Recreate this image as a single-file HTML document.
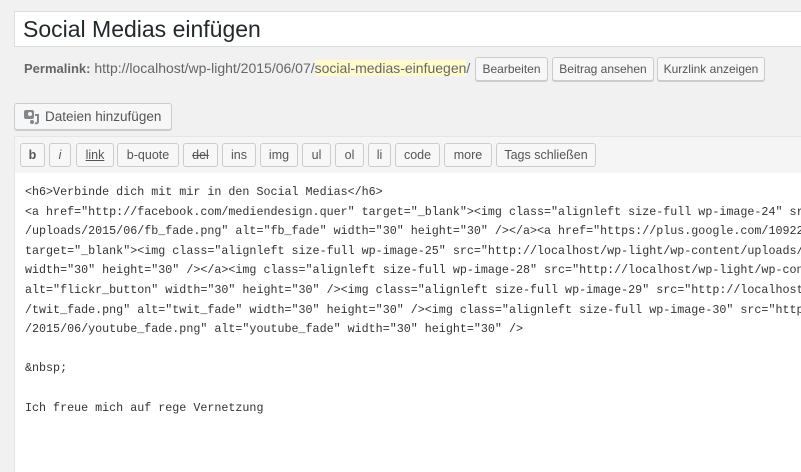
<!DOCTYPE html>
<html><head><meta charset="utf-8"><style>
body{margin:0;width:801px;height:472px;background:#f1f1f1;overflow:hidden;font-family:"Liberation Sans",sans-serif;position:relative;color:#444}
.title{position:absolute;left:14px;top:11px;width:787px;height:36px;background:#fff;border:1px solid #ddd;border-right:none;box-sizing:border-box;font-size:23px;color:#23282d;padding:4px 0 0 8px}
.perm{position:absolute;left:24px;top:60px;font-size:14px;color:#666;white-space:nowrap}
.perm b{color:#666;font-size:13px}
.hl{background:#fffbcc}
.btn{position:absolute;height:24px;border:1px solid #ccc;border-radius:3px;background:#f7f7f7;box-sizing:border-box;font-size:12px;color:#555;text-align:center;line-height:22px;box-shadow:0 1px 0 #ccc}
.tb{position:absolute;left:14px;top:136px;width:787px;height:38px;background:#f5f5f5;border:1px solid #e5e5e5;border-right:none;box-sizing:border-box}
.tbtn{position:absolute;top:143px;height:24px;border:1px solid #ccc;border-radius:3px;background:#f7f7f7;box-sizing:border-box;font-size:12.5px;color:#555;text-align:center;line-height:22px}
.ta{position:absolute;left:14px;top:173px;width:787px;height:299px;background:#fff;border-left:1px solid #e5e5e5;box-sizing:border-box;overflow:hidden}
pre{position:absolute;left:10px;top:10px;margin:0;font-family:"Liberation Mono",monospace;font-size:11.7px;line-height:19.6px;color:#333;white-space:pre}
</style></head><body>
<div class="title">Social Medias einfügen</div>
<div class="perm"><b>Permalink:</b> http://localhost/wp-light/2015/06/07/<span class="hl">social-medias-einfuegen</span>/</div>
<div class="btn" style="left:475px;top:57px;width:73px">Bearbeiten</div>
<div class="btn" style="left:552px;top:57px;width:102px">Beitrag ansehen</div>
<div class="btn" style="left:657px;top:57px;width:108px">Kurzlink anzeigen</div>
<div class="btn" style="left:14px;top:103px;width:158px;height:27px;font-size:13.5px;line-height:25px;text-align:left;padding-left:30px">
<svg style="position:absolute;left:8px;top:5px" width="17" height="16" viewBox="0 0 17 16"><rect x="1" y="1" width="10" height="9" rx="2" fill="#82878c"/><circle cx="7" cy="5" r="2" fill="#f7f7f7"/><circle cx="9" cy="13" r="2" fill="#82878c"/><path d="M12 6h3v7a2 2 0 0 1-3 1" fill="none" stroke="#82878c" stroke-width="2"/></svg>Dateien hinzufügen</div>
<div class="tb"></div>
<div class="tbtn" style="left:20px;width:25px;font-weight:bold">b</div>
<div class="tbtn" style="left:49px;width:22px;font-style:italic">i</div>
<div class="tbtn" style="left:76px;width:38px;text-decoration:underline">link</div>
<div class="tbtn" style="left:117px;width:62px">b-quote</div>
<div class="tbtn" style="left:183px;width:35px;text-decoration:line-through">del</div>
<div class="tbtn" style="left:222px;width:34px">ins</div>
<div class="tbtn" style="left:260px;width:38px">img</div>
<div class="tbtn" style="left:302px;width:29px">ul</div>
<div class="tbtn" style="left:335px;width:29px">ol</div>
<div class="tbtn" style="left:368px;width:23px">li</div>
<div class="tbtn" style="left:395px;width:45px">code</div>
<div class="tbtn" style="left:444px;width:48px">more</div>
<div class="tbtn" style="left:496px;width:100px">Tags schließen</div>
<div class="ta"><pre>&lt;h6&gt;Verbinde dich mit mir in den Social Medias&lt;/h6&gt;
&lt;a href="http://facebook.com/mediendesign.quer" target="_blank"&gt;&lt;img class="alignleft size-full wp-image-24" src="http://localhost/
/uploads/2015/06/fb_fade.png" alt="fb_fade" width="30" height="30" /&gt;&lt;/a&gt;&lt;a href="https://plus.google.com/109223
target="_blank"&gt;&lt;img class="alignleft size-full wp-image-25" src="http://localhost/wp-light/wp-content/uploads/
width="30" height="30" /&gt;&lt;/a&gt;&lt;img class="alignleft size-full wp-image-28" src="http://localhost/wp-light/wp-cont
alt="flickr_button" width="30" height="30" /&gt;&lt;img class="alignleft size-full wp-image-29" src="http://localhost/
/twit_fade.png" alt="twit_fade" width="30" height="30" /&gt;&lt;img class="alignleft size-full wp-image-30" src="http://
/2015/06/youtube_fade.png" alt="youtube_fade" width="30" height="30" /&gt;

&amp;nbsp;

Ich freue mich auf rege Vernetzung</pre></div>
</body></html>
